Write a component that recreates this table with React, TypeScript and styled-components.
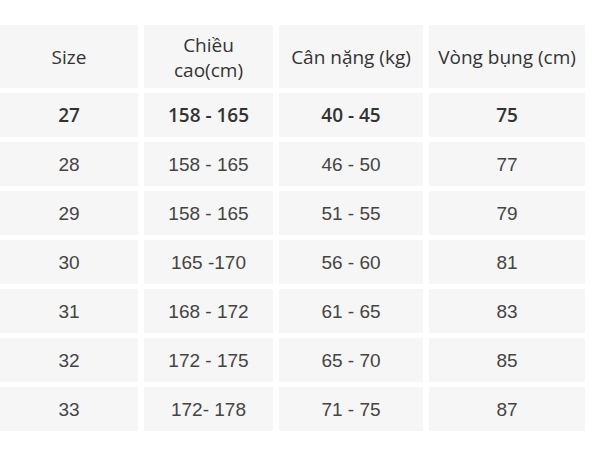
import React from "react";
import styled, { createGlobalStyle } from "styled-components";

const Global = createGlobalStyle`
  html, body { margin: 0; padding: 0; background: #ffffff; }
  body { font-family: "Open Sans", "Noto Sans", sans-serif; }
`;

const Page = styled.div`
  padding-top: 25px;
`;

const Table = styled.div`
  display: grid;
  grid-template-columns: 138px 129px 144px 156px;
  grid-template-rows: 63px repeat(7, 44px);
  column-gap: 6px;
  row-gap: 5px;
`;

const Cell = styled.div<{ $head?: boolean; $bold?: boolean }>`
  background: #f6f6f6;
  display: flex;
  align-items: center;
  justify-content: center;
  text-align: center;
  color: ${(p) => (p.$head || p.$bold ? "#333333" : "#444444")};
  font-family: ${(p) =>
    p.$head || p.$bold ? '"Open Sans", "Noto Sans", sans-serif' : '"Liberation Sans", Arial, sans-serif'};
  font-size: ${(p) => (p.$head ? "19px" : p.$bold ? "19px" : "19px")};
  font-weight: ${(p) => (p.$bold ? 600 : 400)};
  line-height: 25px;
  padding-top: ${(p) => (p.$head ? "2px" : "0")};
  box-sizing: border-box;
`;

const HeadText = styled.span`
  white-space: pre-line;
`;

const headers = ["Size", "Chiều\ncao(cm)", "Cân nặng (kg)", "Vòng bụng (cm)"];

const rows: string[][] = [
  ["27", "158 - 165", "40 - 45", "75"],
  ["28", "158 - 165", "46 - 50", "77"],
  ["29", "158 - 165", "51 - 55", "79"],
  ["30", "165 -170", "56 - 60", "81"],
  ["31", "168 - 172", "61 - 65", "83"],
  ["32", "172 - 175", "65 - 70", "85"],
  ["33", "172- 178", "71 - 75", "87"],
];

export default function App() {
  return (
    <>
      <Global />
      <Page>
        <Table>
          {headers.map((h) => (
            <Cell key={h} $head>
              <HeadText>{h}</HeadText>
            </Cell>
          ))}
          {rows.map((r, i) =>
            r.map((v, j) => (
              <Cell key={`${i}-${j}`} $bold={i === 0}>
                {v}
              </Cell>
            ))
          )}
        </Table>
      </Page>
    </>
  );
}
